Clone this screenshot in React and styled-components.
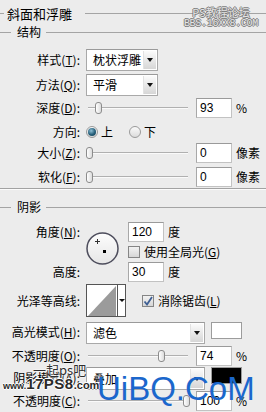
import React from 'react';
import styled, { createGlobalStyle } from 'styled-components';

const GlobalStyle = createGlobalStyle`
  html, body { margin: 0; padding: 0; }
  body {
    background: #ececec;
    font-family: "Noto Sans CJK SC", "Liberation Sans", sans-serif;
  }
`;

const Panel = styled.div`
  position: relative;
  display: flex;
  flex-direction: column;
  width: 266px;
  height: 412px;
  overflow: hidden;
  background: #ececec;
  color: #000;
  font-size: 12px;
`;

const Legend = styled.div`
  display: flex;
  align-items: center;
  flex: none;
  height: ${p => p.$h}px;
  margin-top: ${p => p.$mt || 0}px;
  margin-bottom: ${p => p.$mb || 0}px;
  font-size: ${p => p.$size || 12}px;
  line-height: 1;
  white-space: nowrap;
  &::before {
    content: '';
    width: ${p => p.$lead}px;
    height: 1px;
    background: #a4a4a4;
    margin-right: ${p => p.$gap}px;
  }
  &::after {
    content: '';
    flex: 1;
    height: 1px;
    background: #a4a4a4;
    margin-left: ${p => p.$trail}px;
  }
`;

const Divider = styled.div`
  flex: none;
  border-top: 1px solid #a2a2a2;
  border-bottom: 1px solid #fbfbfb;
`;

const Row = styled.div`
  display: grid;
  grid-template-columns: 80px 1fr;
  column-gap: 6px;
  align-items: center;
  flex: none;
  box-sizing: border-box;
  height: ${p => p.$h}px;
  padding-top: ${p => p.$pt || 0}px;
`;

const Label = styled.label`
  text-align: right;
  white-space: nowrap;
  font-size: 12px;
  line-height: 14px;
  grid-area: ${p => p.$area || 'auto'};
`;

const Controls = styled.div`
  display: flex;
  align-items: ${p => p.$top ? 'flex-start' : 'center'};
  align-self: ${p => p.$top ? 'start' : 'center'};
  grid-area: ${p => p.$area || 'auto'};
  padding-top: ${p => p.$pt || 0}px;
`;

const Select = styled.div`
  display: flex;
  box-sizing: border-box;
  width: ${p => p.$w}px;
  height: ${p => p.$h || 22}px;
  border: 1px solid #a9a9a9;
  border-top-color: #9a9a9a;
  background: #fff;
`;

const SelectValue = styled.span`
  flex: 1;
  padding-left: 6px;
  font-size: 12px;
  line-height: ${p => (p.$h || 22) - 2}px;
  white-space: nowrap;
  overflow: hidden;
`;

const SelectArrow = styled.span`
  display: flex;
  align-items: center;
  justify-content: center;
  width: 12px;
  margin: 1px;
  background: linear-gradient(#fbfbfb, #d6d6d6);
  border-left: 1px solid #e2e2e2;
  &::after {
    content: '';
    border-left: 3.5px solid transparent;
    border-right: 3.5px solid transparent;
    border-top: 4px solid #111;
  }
`;

const Slider = styled.div`
  position: relative;
  width: 100px;
  height: 2px;
  margin-left: 2px;
  border-top: 1px solid #b0b0b0;
  border-bottom: 1px solid #fafafa;
  box-sizing: border-box;
`;

const Thumb = styled.span`
  position: absolute;
  left: ${p => p.$pos}px;
  top: -6px;
  width: 7px;
  height: 12px;
  box-sizing: border-box;
  border: 1px solid #8c8c8c;
  border-radius: 3px;
  background: linear-gradient(90deg, #ffffff, #dcdcdc);
`;

const NumBox = styled.div`
  box-sizing: border-box;
  width: 36px;
  height: 20px;
  margin-left: ${p => p.$ml || 0}px;
  padding-left: 3px;
  border: 1px solid #c2c2c2;
  border-top-color: #9a9a9a;
  border-left-color: #a8a8a8;
  background: #fff;
  font: 12px/18px "Liberation Sans", "DejaVu Sans", sans-serif;
`;

const Unit = styled.span`
  margin-left: ${p => p.$ml || 4}px;
  font-size: 12px;
  line-height: 14px;
  white-space: nowrap;
`;

const Radio = styled.span`
  display: inline-flex;
  align-items: center;
  justify-content: center;
  box-sizing: border-box;
  width: 12px;
  height: 12px;
  margin-left: ${p => p.$ml || 0}px;
  border: 1px solid #9a9a9a;
  border-radius: 50%;
  background: linear-gradient(#fafafa, #dcdcdc);
  &::after {
    content: '';
    display: ${p => p.$on ? 'block' : 'none'};
    width: 8px;
    height: 8px;
    border-radius: 50%;
    background: radial-gradient(circle at 40% 35%, #8fc0d6, #245d78 55%, #183f52);
  }
`;

const Check = styled.span`
  display: inline-flex;
  align-items: center;
  justify-content: center;
  box-sizing: border-box;
  width: 12px;
  height: 12px;
  margin-left: ${p => p.$ml || 0}px;
  border: 1px solid #858585;
  background: linear-gradient(#f2f2f2, #d6d6d6);
`;

const AngleGrid = styled.div`
  display: grid;
  grid-template-columns: 80px 36px auto;
  grid-template-rows: 20px 20px 20px;
  grid-template-areas:
    "l1 dial c1"
    ".  dial c2"
    "l3 dial c3";
  column-gap: 6px;
  align-items: center;
  flex: none;
`;

const DialBox = styled.div`
  grid-area: dial;
  align-self: start;
  margin-top: 10px;
  width: 33px;
  height: 33px;
`;

const Contour = styled.div`
  display: flex;
  box-sizing: border-box;
  width: 40px;
  height: 33px;
  border: 1px solid #555;
  background: #fff;
`;

const ContourArrow = styled.span`
  display: flex;
  align-items: center;
  justify-content: center;
  flex: 1;
  border-left: 1px solid #555;
  &::after {
    content: '';
    border-left: 3px solid transparent;
    border-right: 3px solid transparent;
    border-top: 3px solid #111;
  }
`;

const Swatch = styled.span`
  box-sizing: border-box;
  width: 31px;
  height: 17px;
  margin-left: 6px;
  border: 1px solid #9c9c9c;
  background: ${p => p.$color};
`;

const TopMark = styled.div`
  position: absolute;
  top: 7px;
  right: 8px;
  display: flex;
  flex-direction: column;
  align-items: center;
  gap: 1px;
  color: #e4e4e4;
  text-shadow: -1px 0 #7c7c7c, 1px 0 #7c7c7c, 0 -1px #7c7c7c, 0 1px #7c7c7c;
  pointer-events: none;
`;

const TopMarkLine = styled.span`
  display: block;
  font-size: ${p => p.$size}px;
  line-height: ${p => p.$lh}px;
  font-family: ${p => p.$mono ? '"Liberation Mono", monospace' : '"Noto Sans CJK SC", sans-serif'};
  letter-spacing: ${p => p.$ls || 0}px;
  white-space: nowrap;
`;

const Stamp = styled.span`
  position: absolute;
  left: ${p => p.$x}px;
  top: ${p => p.$y}px;
  white-space: nowrap;
  pointer-events: none;
`;

const YiqiMark = styled(Stamp)`
  font-size: 13px;
  line-height: 13px;
  color: #2e2e2e;
  text-shadow: 0 0 2px #fff, 0 0 2px #fff;
`;

const WwwMark = styled(Stamp)`
  font-family: "Liberation Sans", sans-serif;
  font-weight: bold;
  color: #2a2a2a;
  line-height: 14px;
  text-shadow: -1px 0 #fff, 1px 0 #fff, 0 -1px #fff, 0 1px #fff;
`;

const WwwPart = styled.span`
  font-size: ${p => p.$size}px;
  letter-spacing: ${p => p.$ls || 0}px;
`;

const BrandMark = styled(Stamp)`
  font-family: "Liberation Sans", Arial, sans-serif;
  font-size: 33px;
  line-height: 33px;
  color: #1b67cc;
`;

const Dial = () => (
  <DialBox>
    <svg width="33" height="33" viewBox="0 0 33 33">
      <defs>
        <linearGradient id="dialFill" x1="0" y1="0" x2="0" y2="1">
          <stop offset="0" stopColor="#fdfdfd" />
          <stop offset="1" stopColor="#e6e6e6" />
        </linearGradient>
      </defs>
      <circle cx="16.5" cy="16.5" r="15.5" fill="url(#dialFill)" stroke="#4d4d5c" strokeWidth="1.5" />
      <path d="M11.5 7v5M9 9.5h5" stroke="#333" strokeWidth="1" />
      <rect x="17" y="18" width="3" height="3" fill="#000" />
    </svg>
  </DialBox>
);

const CheckMark = () => (
  <svg width="10" height="10" viewBox="0 0 10 10">
    <path d="M1.5 5.5l2.5 3 5-7.5" fill="none" stroke="#3e5f94" strokeWidth="1.8" />
  </svg>
);

const ContourPicker = () => (
  <Contour>
    <svg width="30" height="31" viewBox="0 0 30 31">
      <polygon points="1,31 29,1 29,31" fill="#9b9b9b" />
    </svg>
    <ContourArrow />
  </Contour>
);

const SliderField = ({ pos, value, unit }) => (
  <>
    <Slider>
      <Thumb $pos={pos} />
    </Slider>
    <NumBox $ml={8}>{value}</NumBox>
    <Unit>{unit}</Unit>
  </>
);

export default function App() {
  return (
    <>
      <GlobalStyle />
      <Panel>
        <Legend $h={26} $size={13} $lead={4} $gap={3} $trail={13}>斜面和浮雕</Legend>
        <Legend $h={12} $lead={11} $gap={6} $trail={5} $mb={10}>结构</Legend>

        <Row $h={24}>
          <Label>样式(<u>T</u>):</Label>
          <Controls>
            <Select $w={72}>
              <SelectValue>枕状浮雕</SelectValue>
              <SelectArrow />
            </Select>
          </Controls>
        </Row>
        <Row $h={25}>
          <Label>方法(<u>Q</u>):</Label>
          <Controls>
            <Select $w={72}>
              <SelectValue>平滑</SelectValue>
              <SelectArrow />
            </Select>
          </Controls>
        </Row>
        <Row $h={21}>
          <Label>深度(<u>D</u>):</Label>
          <Controls>
            <SliderField pos={7} value="93" unit="%" />
          </Controls>
        </Row>
        <Row $h={23} $pt={4}>
          <Label>方向:</Label>
          <Controls>
            <Radio $on />
            <Unit $ml={3}>上</Unit>
            <Radio $ml={16} />
            <Unit $ml={3}>下</Unit>
          </Controls>
        </Row>
        <Row $h={24}>
          <Label>大小(<u>Z</u>):</Label>
          <Controls>
            <SliderField pos={-2} value="0" unit="像素" />
          </Controls>
        </Row>
        <Row $h={23}>
          <Label>软化(<u>F</u>):</Label>
          <Controls>
            <SliderField pos={-2} value="0" unit="像素" />
          </Controls>
        </Row>

        <Divider />
        <Legend $h={14} $mt={10} $mb={8} $lead={11} $gap={6} $trail={5}>阴影</Legend>

        <AngleGrid>
          <Label $area="l1">角度(<u>N</u>):</Label>
          <Dial />
          <Controls $area="c1">
            <NumBox>120</NumBox>
            <Unit>度</Unit>
          </Controls>
          <Controls $area="c2">
            <Check />
            <Unit $ml={4}>使用全局光(<u>G</u>)</Unit>
          </Controls>
          <Label $area="l3">高度:</Label>
          <Controls $area="c3">
            <NumBox>30</NumBox>
            <Unit>度</Unit>
          </Controls>
        </AngleGrid>

        <Row $h={37}>
          <Label>光泽等高线:</Label>
          <Controls>
            <ContourPicker />
            <Check $ml={16}><CheckMark /></Check>
            <Unit $ml={4}>消除锯齿(<u>L</u>)</Unit>
          </Controls>
        </Row>
        <Row $h={26}>
          <Label>高光模式(<u>H</u>):</Label>
          <Controls $top $pt={3}>
            <Select $w={119}>
              <SelectValue>滤色</SelectValue>
              <SelectArrow />
            </Select>
            <Swatch $color="#ffffff" />
          </Controls>
        </Row>
        <Row $h={21}>
          <Label>不透明度(<u>O</u>):</Label>
          <Controls>
            <SliderField pos={70} value="74" unit="%" />
          </Controls>
        </Row>
        <Row $h={24}>
          <Label>阴影模式(<u>A</u>):</Label>
          <Controls $top $pt={1}>
            <Select $w={119} $h={23}>
              <SelectValue $h={23}>叠加</SelectValue>
              <SelectArrow />
            </Select>
            <Swatch $color="#000000" />
          </Controls>
        </Row>
        <Row $h={22}>
          <Label>不透明度(<u>C</u>):</Label>
          <Controls>
            <SliderField pos={95} value="100" unit="%" />
          </Controls>
        </Row>

        <TopMark>
          <TopMarkLine $size={11} $lh={11}>PS教程论坛</TopMarkLine>
          <TopMarkLine $size={10} $lh={10} $mono $ls={-0.3}>BBS.16XX8.COM</TopMarkLine>
        </TopMark>

        <YiqiMark $x={33} $y={363}>一起ps吧</YiqiMark>
        <WwwMark $x={3} $y={377}>
          <WwwPart $size={9}>www.</WwwPart>
          <WwwPart $size={15} $ls={0.5}>17PS8</WwwPart>
          <WwwPart $size={11}>.com</WwwPart>
        </WwwMark>
        <BrandMark $x={97} $y={372}>UiBQ.CoM</BrandMark>
      </Panel>
    </>
  );
}
